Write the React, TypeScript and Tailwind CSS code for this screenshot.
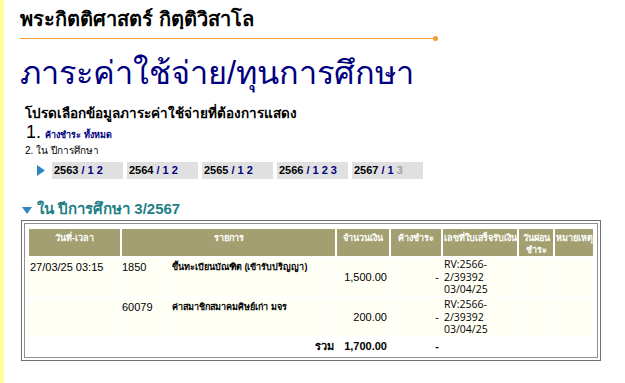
const years = [
  { y: "2563", terms: ["1", "2"], dim: [] as string[] },
  { y: "2564", terms: ["1", "2"], dim: [] as string[] },
  { y: "2565", terms: ["1", "2"], dim: [] as string[] },
  { y: "2566", terms: ["1", "2", "3"], dim: [] as string[] },
  { y: "2567", terms: ["1", "3"], dim: ["3"] },
];

const rows = [
  { date: "27/03/25 03:15", code: "1850", item: "ขึ้นทะเบียนบัณฑิต (เข้ารับปริญญา)", amount: "1,500.00" },
  { date: "", code: "60079", item: "ค่าสมาชิกสมาคมศิษย์เก่า มจร", amount: "200.00" },
];

export default function App() {
  return (
    <div className="flex w-[625px] h-[383px] bg-white overflow-hidden font-['Liberation_Sans',Tahoma,sans-serif] text-black">
      <div className="w-[4px] bg-[#ffff99] shrink-0" />
      <div className="pl-[16px] pt-[6px] flex-1">
        <h1 className="text-[20px] leading-[26px] font-bold">พระกิตติศาสตร์ กิตฺติวิสาโล</h1>
        <div className="flex items-center w-[418px] mt-[4px]">
          <div className="h-px flex-1 bg-[#f0a030]" />
          <div className="w-[5px] h-[5px] rounded-full bg-[#f0a030] -ml-[2px]" />
        </div>
        <h2 className="text-[32.5px] leading-[44px] text-[#000080] mt-[10px]">ภาระค่าใช้จ่าย/ทุนการศึกษา</h2>

        <div className="ml-[5px] mt-[9px]">
          <p className="text-[13.5px] leading-[20px] font-bold">โปรดเลือกข้อมูลภาระค่าใช้จ่ายที่ต้องการแสดง</p>
          <div className="flex items-baseline gap-[4px] leading-[16px]">
            <span className="text-[18px] ml-[1px]">1.</span>
            <span className="text-[9px] font-bold text-[#000080]">ค้างชำระ ทั้งหมด</span>
          </div>
          <p className="text-[10px] leading-[14px] mt-[1px]">2. ใน ปีการศึกษา</p>
          <div className="flex items-center gap-[4px] mt-[4px] ml-[12px]">
            <svg width="8" height="11" viewBox="0 0 8 11" className="mr-[3px]">
              <path d="M0 0 L8 5.5 L0 11 Z" fill="#2f86c0" />
            </svg>
            {years.map((yr) => (
              <div key={yr.y} className="w-[71px] h-[17px] bg-[#e0e0e0] flex items-center pl-[2px] text-[11px] font-bold">
                <span>{yr.y}</span>
                <span className="text-[#000080] ml-[3px]">/</span>
                {yr.terms.map((t) => (
                  <span key={t} className={`ml-[3px] ${yr.dim.includes(t) ? "text-[#a0a0a0]" : "text-[#000080]"}`}>
                    {t}
                  </span>
                ))}
              </div>
            ))}
          </div>
        </div>

        <div className="flex items-center mt-[19px] ml-[2px] text-[#1e7f86]">
          <svg width="10" height="7" viewBox="0 0 10 7" className="mr-[5px] mt-[2px]">
            <path d="M0 0 L10 0 L5 7 Z" fill="#2f86c0" />
          </svg>
          <span className="text-[15px] leading-[22px] font-bold">ใน ปีการศึกษา 3/2567</span>
        </div>

        <div className="w-[580px] border border-[#707070] p-[2px] ml-[1px]">
          <div className="border border-[#909090] px-[2px] pt-[3px] pb-0">
            <table className="w-full border-separate border-spacing-[2px] text-[11px]">
              <thead>
                <tr className="bg-[#a39f70] text-white text-[9px] font-bold leading-[12px]">
                  <th className="w-[91px] h-[24px] align-top pt-[3px]">วันที่-เวลา</th>
                  <th colSpan={2} className="align-top pt-[3px]">รายการ</th>
                  <th className="w-[52px] align-top pt-[3px]">จำนวนเงิน</th>
                  <th className="w-[50px] align-top pt-[3px]">ค้างชำระ</th>
                  <th className="w-[74px] align-top pt-[3px]">เลขที่ใบเสร็จรับเงิน</th>
                  <th className="w-[34px] align-top pt-[3px]">วันผ่อน<br />ชำระ</th>
                  <th className="w-[38px] align-top pt-[3px]">หมายเหตุ</th>
                </tr>
              </thead>
              <tbody>
                {rows.map((r) => (
                  <tr key={r.code} className="bg-[#fffff5]">
                    <td className="h-[38px] align-top pt-[2px] text-[11px] leading-[14px] pl-[1px]">{r.date}</td>
                    <td className="w-[48px] align-top pt-[2px] text-[11px] leading-[14px]">{r.code}</td>
                    <td className="align-top pt-[2px] text-[9px] font-bold leading-[14px]">{r.item}</td>
                    <td className="text-right text-[11px] pr-[2px]">{r.amount}</td>
                    <td className="text-right text-[11px] pr-[2px]">-</td>
                    <td className="font-['Open_Sans',sans-serif] text-[10.5px] leading-[12.5px] pl-[1px] py-0">
                      RV:2566-
                      <br />
                      2/39392
                      <br />
                      03/04/25
                    </td>
                    <td />
                    <td />
                  </tr>
                ))}
                <tr className="font-bold text-[11px]">
                  <td colSpan={3} className="h-[17px] text-right pr-[1px] text-[11px]">รวม</td>
                  <td className="text-right pr-[2px]">1,700.00</td>
                  <td className="text-right pr-[2px]">-</td>
                  <td />
                  <td />
                  <td />
                </tr>
              </tbody>
            </table>
          </div>
        </div>
      </div>
    </div>
  );
}
